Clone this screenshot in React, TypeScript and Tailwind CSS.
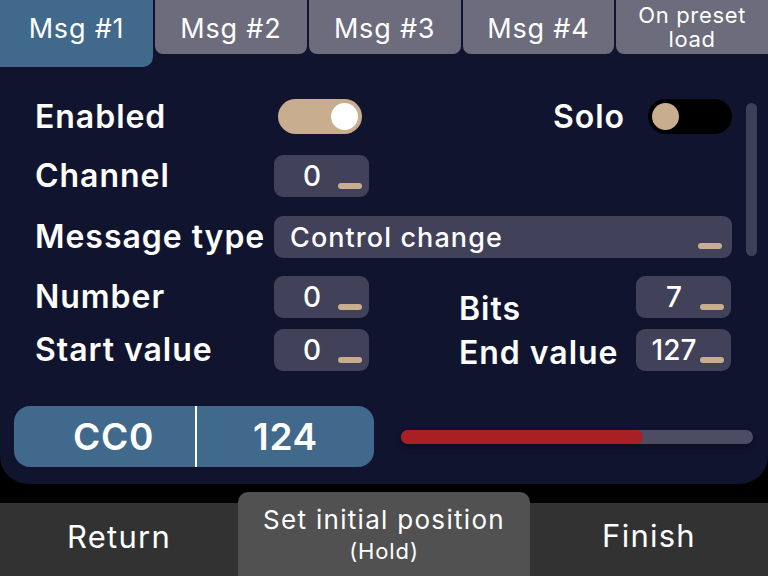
import { ReactNode } from "react";

const tabs = ["Msg #1", "Msg #2", "Msg #3", "Msg #4"];

function Dash() {
  return <span className="block w-[24px] h-[6px] rounded-full bg-[#c8ad8e]" />;
}

function NumBox({ value }: { value: string }) {
  return (
    <div className="relative w-[95px] h-[42px] rounded-[9px] bg-[#414159] flex items-center">
      <span className="w-[76px] text-center text-[28px] font-medium text-white leading-none">{value}</span>
      <span className="absolute right-[7px] bottom-[8px]">
        <Dash />
      </span>
    </div>
  );
}

function Toggle({ on, dark }: { on: boolean; dark?: boolean }) {
  return (
    <div
      className={`w-[84px] h-[35px] rounded-full flex items-center px-[4px] ${
        dark ? "bg-black justify-start" : "bg-[#c8ad8e] justify-end"
      }`}
    >
      <span className={`w-[27px] h-[27px] rounded-full ${on ? "bg-white" : "bg-[#c8ad8e]"}`} />
    </div>
  );
}

function Label({ children, className = "" }: { children: ReactNode; className?: string }) {
  return (
    <div className={`text-[32px] tracking-[0.03em] font-semibold text-white leading-none whitespace-nowrap ${className}`}>
      {children}
    </div>
  );
}

export default function App() {
  return (
    <div className="w-[768px] h-[576px] bg-black flex flex-col overflow-hidden font-['Inter',sans-serif]">
      {/* main panel */}
      <div className="h-[484px] bg-[#11142f] rounded-b-[28px] flex flex-col">
        {/* tabs */}
        <div className="flex items-start gap-[2px] h-[67px]">
          {tabs.map((t, i) => (
            <div
              key={t}
              className={
                i === 0
                  ? "w-[153px] h-[67px] bg-[#41698b] rounded-br-[10px] flex items-start justify-center pt-[9px] text-[27px] tracking-[0.03em] text-white"
                  : "flex-1 h-[54px] bg-[#6c6c7c] rounded-b-[8px] flex items-start justify-center pt-[9px] text-[27px] tracking-[0.03em] text-white"
              }
            >
              {t}
            </div>
          ))}
          <div className="flex-1 h-[54px] bg-[#6c6c7c] rounded-bl-[8px] flex flex-col items-center pt-[3px] text-[22px] tracking-[0.03em] leading-[24px] text-white">
            <span>On preset</span>
            <span>load</span>
          </div>
        </div>

        {/* settings */}
        <div className="flex pl-[35px] pt-[32px]">
          <div className="w-[697px] flex flex-col">
            <div className="h-[35px] flex items-center">
              <Label className="w-[243px]">Enabled</Label>
              <Toggle on />
              <div className="flex-1" />
              <Label className="mr-[23px]">Solo</Label>
              <Toggle on={false} dark />
            </div>

            <div className="h-[43px] mt-[20px] flex items-center">
              <Label className="w-[239px]">Channel</Label>
              <NumBox value="0" />
            </div>

            <div className="h-[42px] mt-[19px] flex items-center">
              <Label className="w-[239px]">Message type</Label>
              <div className="relative flex-1 h-[42px] rounded-[9px] bg-[#414159] flex items-center pl-[16px]">
                <span className="text-[27px] tracking-[0.04em] font-medium text-white leading-none">Control change</span>
                <span className="absolute right-[10px] bottom-[9px]">
                  <Dash />
                </span>
              </div>
            </div>

            <div className="mt-[18px] grid grid-cols-[239px_95px_90px_177px_95px] grid-rows-[42px_42px] gap-y-[11px] items-center">
              <Label>Number</Label>
              <NumBox value="0" />
              <div />
              <Label className="self-end mb-[-7px]">Bits</Label>
              <NumBox value="7" />

              <Label>Start value</Label>
              <NumBox value="0" />
              <div />
              <Label className="mt-[6px]">End value</Label>
              <NumBox value="127" />
            </div>
          </div>
          <div className="ml-[14px] mt-[4px] w-[11px] h-[153px] rounded-full bg-[#3e4058]" />
        </div>

        {/* readout */}
        <div className="flex items-center pl-[14px] pr-[15px] mt-[35px]">
          <div className="w-[360px] h-[61px] rounded-[16px] bg-[#41698b] flex items-stretch text-white text-[37px] tracking-[0.02em] font-semibold">
            <div className="w-[181px] flex items-center justify-center pl-[18px]">CC0</div>
            <div className="w-[2px] bg-white" />
            <div className="flex-1 flex items-center justify-center">124</div>
          </div>
          <div className="ml-[27px] flex-1 h-[14px] rounded-full bg-[#4c4d65] shadow-[0_3px_6px_rgba(0,0,0,0.35)] overflow-hidden">
            <div className="h-full rounded-full bg-[#a81f24]" style={{ width: `${(242 / 352) * 100}%` }} />
          </div>
        </div>
      </div>

      {/* bottom bar */}
      <div className="flex-1 flex items-end">
        <div className="w-[238px] h-[73px] bg-[#323232] flex items-center justify-center text-[31px] tracking-[0.04em] text-white pb-[4px]">
          Return
        </div>
        <div className="w-[292px] h-[84px] bg-[#515151] rounded-t-[10px] flex flex-col items-center pt-[12px] text-white">
          <span className="text-[26px] tracking-[0.05em] leading-[32px]">Set initial position</span>
          <span className="text-[22px] tracking-[0.04em] leading-[30px]">(Hold)</span>
        </div>
        <div className="flex-1 h-[73px] bg-[#323232] flex items-center justify-center text-[31px] tracking-[0.04em] text-white pb-[6px]">
          Finish
        </div>
      </div>
    </div>
  );
}
